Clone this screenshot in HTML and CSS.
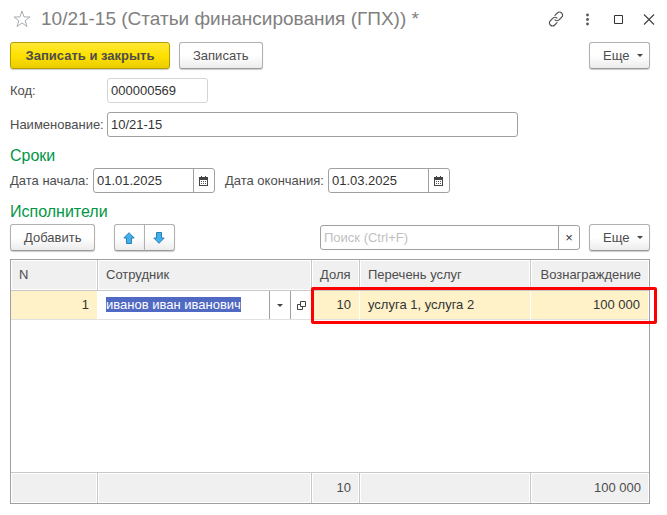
FILE: index.html
```
<!DOCTYPE html>
<html lang="ru">
<head>
  <meta charset="UTF-8" />
  <meta name="viewport" content="width=device-width, initial-scale=1.0"/>
  <title>10/21-15 (Статьи финансирования (ГПХ))</title>
  <link rel="stylesheet" href="styles.css">
</head>
<body>

  <!-- Window title -->
  <header class="titlebar">
    <button class="icon-btn" aria-label="В избранное">
      <svg width="18" height="18" viewBox="0 0 18 18"><path d="M9 1l2 5.900 6 .1-4.800 3.600 1.800 5.900L9 13l-5 3.500 1.800-5.900L1 7l6-.1z" fill="none" stroke="#a8adb3"/></svg>
    </button>
    <h1>10/21-15 (Статьи финансирования (ГПХ)) *</h1>
    <div class="window-tools">
      <button class="icon-btn" aria-label="Получить ссылку">
        <svg width="16" height="16" viewBox="0 0 16 16"><g fill="none" stroke="#555" stroke-width="1.2" stroke-linecap="round"><path d="M7 4.300l2.300-2.300a2.800 2.800 0 0 1 4.300 0 2.800 2.800 0 0 1 0 4.300L11 8.900a2.800 2.800 0 0 1-4 0"/><path d="M9 11.700l-2.300 2.300a2.800 2.800 0 0 1-4.300 0 2.800 2.800 0 0 1 0-4.300L5 7.100a2.800 2.800 0 0 1 4 0"/></g></svg>
      </button>
      <button class="icon-btn" aria-label="Меню">
        <svg width="16" height="16" viewBox="0 0 16 16"><g fill="#555"><circle cx="8.500" cy="4" r="1.400"/><circle cx="8.500" cy="8.500" r="1.400"/><circle cx="8.500" cy="13" r="1.400"/></g></svg>
      </button>
      <button class="icon-btn" aria-label="Развернуть">
        <svg width="16" height="16" viewBox="0 0 16 16"><path d="M4.500 4.500h8v8h-8z" fill="none" stroke="#333"/></svg>
      </button>
      <button class="icon-btn" aria-label="Закрыть">
        <svg width="16" height="16" viewBox="0 0 16 16"><path d="M3 3.500l10 10M13 3.500l-10 10" fill="none" stroke="#444" stroke-width="1.200"/></svg>
      </button>
    </div>
  </header>

  <main>
    <div class="bar">
      <button class="btn btn-main">Записать и закрыть</button>
      <button class="btn">Записать</button>
      <button class="btn btn-more">Еще <span class="caret"></span></button>
    </div>

    <!-- Fields -->
    <div class="row">
      <label class="name" for="code">Код:</label>
      <input class="field code" id="code" type="text" value="000000569" readonly>
    </div>
    <div class="row">
      <label class="name" for="title">Наименование:</label>
      <input class="field title" id="title" type="text" value="10/21-15">
    </div>

    <h2>Сроки</h2>
    <div class="row dates">
      <label for="start">Дата начала:</label>
      <div class="field combo">
        <input id="start" type="text" value="01.01.2025">
        <button aria-label="Календарь">
          <svg width="9" height="10" viewBox="0 0 9 10"><path d="M0 1h9v9H0z" fill="#444"/><path d="M1 4h7v5H1z" fill="#fff"/><path d="M2 0h1v2H2zM6 0h1v2H6z" fill="#444"/><path d="M2 5h1v1H2zM4 5h1v1H4zM6 5h1v1H6zM2 7h1v1H2zM4 7h1v1H4zM6 7h1v1H6z" fill="#555"/></svg>
        </button>
      </div>
      <label class="second" for="end">Дата окончания:</label>
      <div class="field combo">
        <input id="end" type="text" value="01.03.2025">
        <button aria-label="Календарь">
          <svg width="9" height="10" viewBox="0 0 9 10"><path d="M0 1h9v9H0z" fill="#444"/><path d="M1 4h7v5H1z" fill="#fff"/><path d="M2 0h1v2H2zM6 0h1v2H6z" fill="#444"/><path d="M2 5h1v1H2zM4 5h1v1H4zM6 5h1v1H6zM2 7h1v1H2zM4 7h1v1H4zM6 7h1v1H6z" fill="#555"/></svg>
        </button>
      </div>
    </div>

    <h2>Исполнители</h2>
    <div class="bar">
      <button class="btn">Добавить</button>
      <div class="btn-group">
        <button class="btn" aria-label="Вверх">
          <svg width="12" height="12" viewBox="0 0 12 12"><path d="M6 .7l5.200 5.300H8.500v5.500h-5V6H.8z" fill="#42b0ec" stroke="#2b7fb5"/></svg>
        </button>
        <button class="btn" aria-label="Вниз">
          <svg width="12" height="12" viewBox="0 0 12 12"><path d="M6 11.300l5.200-5.300H8.500V.5h-5V6H.8z" fill="#42b0ec" stroke="#2b7fb5"/></svg>
        </button>
      </div>
      <div class="field combo search">
        <input type="text" placeholder="Поиск (Ctrl+F)" aria-label="Поиск">
        <button aria-label="Очистить">×</button>
      </div>
      <button class="btn btn-more">Еще <span class="caret"></span></button>
    </div>

    <!-- Performers -->
    <div class="table-wrap">
      <table>
        <colgroup>
          <col class="col-n"><col class="col-person"><col class="col-share"><col><col class="col-pay">
        </colgroup>
        <thead>
          <tr><th>N</th><th>Сотрудник</th><th>Доля</th><th>Перечень услуг</th><th class="num">Вознаграждение</th></tr>
        </thead>
        <tbody>
          <tr class="current">
            <td class="num">1</td>
            <td class="editing">
              <div class="editor">
                <span class="value"><mark>иванов иван иванович</mark></span>
                <button aria-label="Выбрать"><span class="caret"></span></button>
                <button aria-label="Открыть">
                  <svg width="9" height="9" viewBox="0 0 9 9"><path d="M3.500.5h5v5h-5zM3 3.500H.5v5h5V6" fill="none" stroke="#444"/></svg>
                </button>
              </div>
            </td>
            <td class="num">10</td>
            <td>услуга 1, услуга 2</td>
            <td class="num">100 000</td>
          </tr>
          <tr class="empty"><td colspan="5"></td></tr>
        </tbody>
        <tfoot>
          <tr><td></td><td></td><td class="num">10</td><td></td><td class="num">100 000</td></tr>
        </tfoot>
      </table>
      <div class="highlight"></div>
    </div>
  </main>

</body>
</html>
```
FILE: styles.css
```
* {
  box-sizing: border-box;
}
body {
  margin: 0;
  background: #fff;
  color: #4d4d4d;
  font: 13px/16px "Liberation Sans", Arial, sans-serif;
}
button, input {
  font: inherit;
  color: inherit;
}
button {
  cursor: pointer;
}
svg {
  display: block;
}

/* Title */
.titlebar {
  display: flex;
  align-items: center;
  height: 38px;
  padding: 0 10px 0 13px;
}
h1 {
  flex: 1;
  margin: 0 0 0 10px;
  font-size: 19px;
  line-height: 24px;
  font-weight: normal;
  color: #808080;
  white-space: nowrap;
}
.window-tools {
  display: flex;
  gap: 15px;
}
.icon-btn {
  padding: 0;
  border: none;
  background: none;
}

main {
  padding: 4px 17px 10px 10px;
}

/* Buttons */
.bar {
  display: flex;
  align-items: center;
  gap: 9px;
}
.btn {
  height: 27px;
  padding: 0 13px;
  border: 1px solid #b0b0b0;
  border-bottom-color: #999;
  border-radius: 3px;
  background: linear-gradient(#fff 50%, #ececec);
  box-shadow: 0 1px 1px #ccc;
  white-space: nowrap;
}
.btn-main {
  width: 160px;
  border-color: #b39b00;
  background: linear-gradient(#ffe838, #ffe100 50%, #ebcd00);
  font-weight: bold;
}
.btn-more {
  display: flex;
  align-items: center;
  justify-content: space-between;
  width: 61px;
  margin-left: auto;
  padding: 0 6px 0 13px;
}
.caret {
  display: inline-block;
  border: 3px solid transparent;
  border-top-color: #444;
  border-bottom: none;
}
.btn-group {
  display: flex;
  margin-left: 10px;
}
.btn-group .btn {
  width: 31px;
  padding: 0 8px;
}
.btn-group .btn:first-child {
  border-radius: 3px 0 0 3px;
}
.btn-group .btn:last-child {
  margin-left: -1px;
  border-radius: 0 3px 3px 0;
}

/* Fields */
.row {
  display: flex;
  align-items: center;
  margin-top: 9px;
}
.name {
  width: 97px;
  white-space: nowrap;
}
.field {
  height: 25px;
  border: 1px solid #a0a0a0;
  border-radius: 3px;
  background: #fff;
  color: #333;
}
input.field {
  padding: 0 3px;
}
.code {
  width: 101px;
  border-color: #d5d5d5;
}
.title {
  width: 411px;
}
h2 {
  margin: 9px 0 0;
  font-size: 16px;
  line-height: 20px;
  font-weight: normal;
  color: #009646;
}
.dates {
  gap: 4px;
  margin-top: 2px;
}
.dates .second {
  margin-left: 6px;
}
.combo {
  display: flex;
  width: 122px;
}
.combo input {
  flex: 1;
  min-width: 0;
  padding: 0 3px;
  border: none;
  background: none;
}
.combo button {
  display: flex;
  align-items: center;
  justify-content: center;
  width: 21px;
  padding: 0;
  border: none;
  border-left: 1px solid #a0a0a0;
  background: none;
}
.dates + h2 {
  margin-bottom: 2px;
}
.search {
  width: 260px;
  margin-left: auto;
}
.search + .btn-more {
  margin-left: 0;
}
.search input::placeholder {
  color: #bfbfbf;
}

/* Table */
.table-wrap {
  position: relative;
  margin-top: 8px;
  border: 1px solid #a0a0a0;
}
table {
  width: 100%;
  height: 243px;
  table-layout: fixed;
  border-spacing: 0;
}
.col-n { width: 87px; }
.col-person { width: 214px; }
.col-share { width: 48px; }
.col-pay { width: 118px; }
th, td {
  height: 31px;
  padding: 0 8px;
  text-align: left;
  font-weight: normal;
  white-space: nowrap;
}
th, tfoot td {
  background: #f0f0f0;
  border-right: 1px solid #c8c8c8;
  box-shadow: inset 0 0 0 1px #fff;
}
th {
  border-bottom: 1px solid #c8c8c8;
}
tfoot td {
  border-top: 1px solid #c8c8c8;
}
th:last-child, tfoot td:last-child {
  border-right: none;
}
.num {
  text-align: right;
}
.current td {
  height: 29px;
  border-right: 1px solid #fff;
  border-bottom: 1px solid #e0e0e0;
  background: #fff2c8;
  color: #333;
}
.current .editing {
  padding: 0 0 0 8px;
  background: #fff;
}
.editor {
  display: flex;
  align-items: center;
  height: 28px;
}
.value {
  flex: 1;
}
mark {
  background: #5069c3;
  color: #fff;
}
.editor button {
  display: flex;
  align-items: center;
  justify-content: center;
  width: 21px;
  height: 28px;
  padding: 0;
  border: none;
  border-left: 1px solid #a0a0a0;
  background: none;
}
.empty td {
  height: auto;
}

/* Red frame over the filled cells */
.highlight {
  position: absolute;
  top: 27px;
  left: 300px;
  right: -8px;
  height: 37px;
  border: 3px solid #f00;
  border-radius: 2px;
  pointer-events: none;
}
```
